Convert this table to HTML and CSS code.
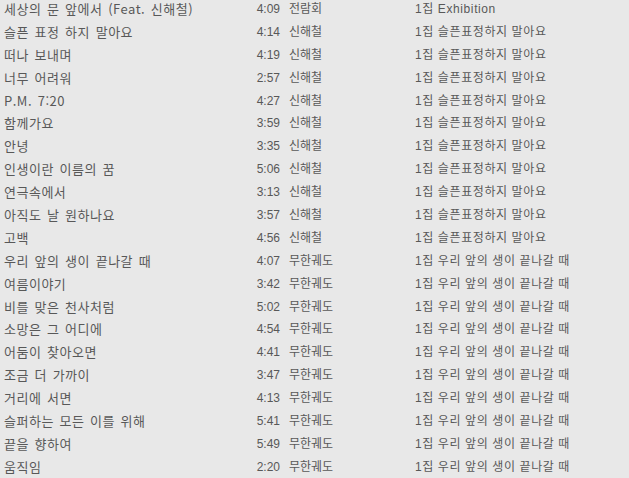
FILE: index.html
```html
<!DOCTYPE html>
<html lang="ko">
<head>
<meta charset="utf-8">
<title>Tracks</title>
<link rel="stylesheet" href="styles.css">
</head>
<body>
<div class="list">
  <div class="row"><span class="title">세상의 문 앞에서 (Feat. 신해철)</span><span class="time">4:09</span><span class="artist">전람회</span><span class="album">1집 Exhibition</span></div>
  <div class="row"><span class="title">슬픈 표정 하지 말아요</span><span class="time">4:14</span><span class="artist">신해철</span><span class="album">1집 슬픈표정하지 말아요</span></div>
  <div class="row"><span class="title">떠나 보내며</span><span class="time">4:19</span><span class="artist">신해철</span><span class="album">1집 슬픈표정하지 말아요</span></div>
  <div class="row"><span class="title">너무 어려워</span><span class="time">2:57</span><span class="artist">신해철</span><span class="album">1집 슬픈표정하지 말아요</span></div>
  <div class="row"><span class="title">P.M. 7:20</span><span class="time">4:27</span><span class="artist">신해철</span><span class="album">1집 슬픈표정하지 말아요</span></div>
  <div class="row"><span class="title">함께가요</span><span class="time">3:59</span><span class="artist">신해철</span><span class="album">1집 슬픈표정하지 말아요</span></div>
  <div class="row"><span class="title">안녕</span><span class="time">3:35</span><span class="artist">신해철</span><span class="album">1집 슬픈표정하지 말아요</span></div>
  <div class="row"><span class="title">인생이란 이름의 꿈</span><span class="time">5:06</span><span class="artist">신해철</span><span class="album">1집 슬픈표정하지 말아요</span></div>
  <div class="row"><span class="title">연극속에서</span><span class="time">3:13</span><span class="artist">신해철</span><span class="album">1집 슬픈표정하지 말아요</span></div>
  <div class="row"><span class="title">아직도 날 원하나요</span><span class="time">3:57</span><span class="artist">신해철</span><span class="album">1집 슬픈표정하지 말아요</span></div>
  <div class="row"><span class="title">고백</span><span class="time">4:56</span><span class="artist">신해철</span><span class="album">1집 슬픈표정하지 말아요</span></div>
  <div class="row"><span class="title">우리 앞의 생이 끝나갈 때</span><span class="time">4:07</span><span class="artist">무한궤도</span><span class="album">1집 우리 앞의 생이 끝나갈 때</span></div>
  <div class="row"><span class="title">여름이야기</span><span class="time">3:42</span><span class="artist">무한궤도</span><span class="album">1집 우리 앞의 생이 끝나갈 때</span></div>
  <div class="row"><span class="title">비를 맞은 천사처럼</span><span class="time">5:02</span><span class="artist">무한궤도</span><span class="album">1집 우리 앞의 생이 끝나갈 때</span></div>
  <div class="row"><span class="title">소망은 그 어디에</span><span class="time">4:54</span><span class="artist">무한궤도</span><span class="album">1집 우리 앞의 생이 끝나갈 때</span></div>
  <div class="row"><span class="title">어둠이 찾아오면</span><span class="time">4:41</span><span class="artist">무한궤도</span><span class="album">1집 우리 앞의 생이 끝나갈 때</span></div>
  <div class="row"><span class="title">조금 더 가까이</span><span class="time">3:47</span><span class="artist">무한궤도</span><span class="album">1집 우리 앞의 생이 끝나갈 때</span></div>
  <div class="row"><span class="title">거리에 서면</span><span class="time">4:13</span><span class="artist">무한궤도</span><span class="album">1집 우리 앞의 생이 끝나갈 때</span></div>
  <div class="row"><span class="title">슬퍼하는 모든 이를 위해</span><span class="time">5:41</span><span class="artist">무한궤도</span><span class="album">1집 우리 앞의 생이 끝나갈 때</span></div>
  <div class="row"><span class="title">끝을 향하여</span><span class="time">5:49</span><span class="artist">무한궤도</span><span class="album">1집 우리 앞의 생이 끝나갈 때</span></div>
  <div class="row"><span class="title">움직임</span><span class="time">2:20</span><span class="artist">무한궤도</span><span class="album">1집 우리 앞의 생이 끝나갈 때</span></div>
</div>
</body>
</html>
```

FILE: styles.css
```css
html, body {
  margin: 0;
  padding: 0;
  background: #e8e8e8;
  overflow: hidden;
}
.list {
  padding-left: 4px;
  font-family: "Liberation Sans", "Noto Sans CJK KR", sans-serif;
  font-size: 12px;
  color: #585858;
}
.row {
  display: grid;
  grid-template-columns: 250px 26px 135px auto;
  align-items: start;
  height: 22.9px;
  line-height: 18px;
  white-space: nowrap;
}
.title {
  font-family: "Noto Sans CJK KR", sans-serif;
  font-size: 13px;
  line-height: 17px;
  letter-spacing: 0.5px;
  word-spacing: 1.5px;
}
.time {
  text-align: right;
}
.artist {
  padding-left: 9px;
}
.album {
  letter-spacing: 0.6px;
}
```
